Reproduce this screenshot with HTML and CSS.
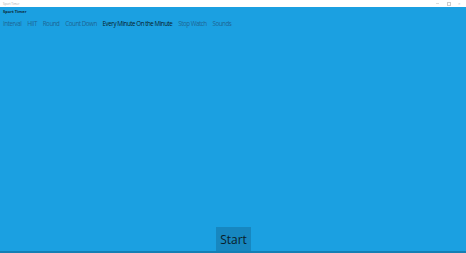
FILE: index.html
```html
<!doctype html>
<html lang="en">
<head>
    <meta charset="UTF-8">
    <title>Sport Timer</title>
    <link rel="stylesheet" href="styles.css">
</head>
<body>
<div class="window">
    <div class="titlebar">
        <span class="title">Sport Timer</span>
        <div class="controls">
            <span class="ctl min"></span>
            <span class="ctl max"></span>
            <span class="ctl close">✕</span>
        </div>
    </div>
    <div class="app">
        <div class="appname">Sport Timer</div>
        <ul class="nav">
            <li>Interval</li>
            <li>HIIT</li>
            <li>Round</li>
            <li>Count Down</li>
            <li class="active">Every Minute On the Minute</li>
            <li>Stop Watch</li>
            <li>Sounds</li>
        </ul>
        <div class="content"></div>
        <div class="footer">
            <button class="start">Start</button>
        </div>
    </div>
</div>
</body>
</html>
```
FILE: styles.css
```css
* {
    margin: 0;
    padding: 0;
    list-style: none;
}

html, body {
    height: 100%;
}

body {
    font-family: "Open Sans", "Noto Sans", sans-serif;
    overflow: hidden;
}

.window {
    height: 100%;
    display: flex;
    flex-direction: column;
}

.titlebar {
    height: 7px;
    background: #fff;
    display: flex;
    align-items: center;
    justify-content: space-between;
    padding-left: 3px;
}

.title {
    font-size: 3px;
    color: #aaa;
}

.controls {
    display: flex;
    height: 100%;
    padding-right: 1px;
}

.ctl {
    width: 11px;
    height: 100%;
    display: flex;
    align-items: center;
    justify-content: center;
    font-size: 3px;
    color: #bbb;
}

.min::after {
    content: "";
    width: 3px;
    border-top: 1px solid #ddd;
}

.max::after {
    content: "";
    width: 2px;
    height: 2px;
    border: 1px solid #ccc;
}

.app {
    flex: 1;
    background: #1ba0e1;
    display: flex;
    flex-direction: column;
    border-bottom: 2px solid #157fb4;
}

.appname {
    font-size: 4px;
    font-weight: bold;
    color: #0b2a3c;
    padding: 2px 0 0 3px;
    height: 8px;
}

.nav {
    display: flex;
    gap: 5.8px;
    padding: 2px 0 0 3px;
    font-size: 6.2px;
    letter-spacing: -0.43px;
    color: #1e6694;
    height: 12px;
}

.nav .active {
    color: #081c28;
}

.content {
    flex: 1;
}

.footer {
    display: flex;
    justify-content: center;
}

.start {
    width: 35px;
    height: 24px;
    border: none;
    background: #1787c0;
    color: #0a1d29;
    font-family: "Open Sans", "Noto Sans", sans-serif;
    font-size: 12px;
    margin-left: 1px;
}
```
